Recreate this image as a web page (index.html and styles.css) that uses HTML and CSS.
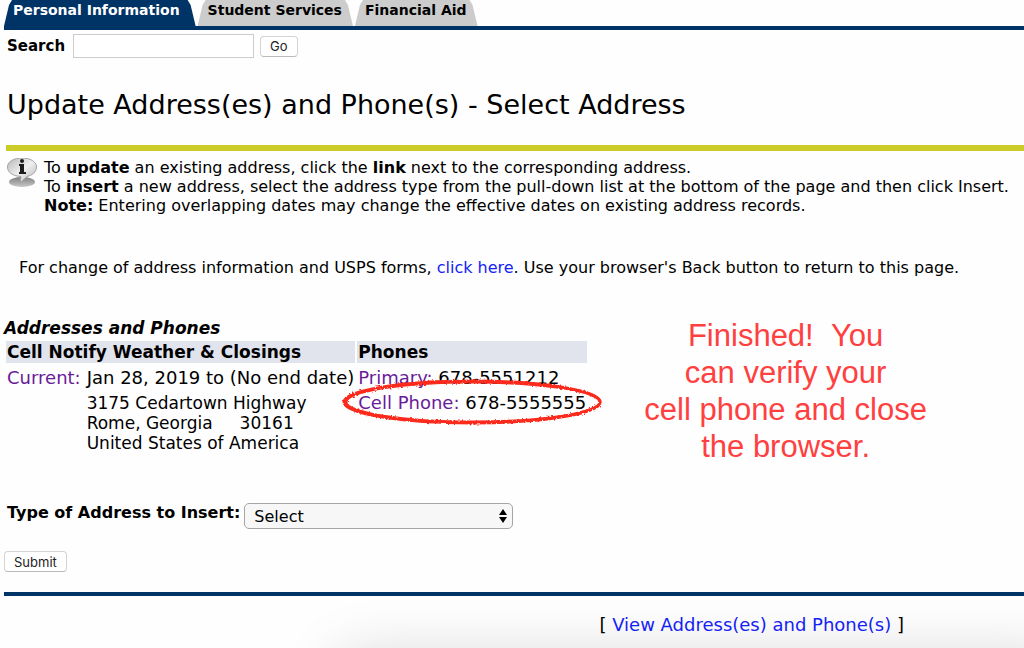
FILE: index.html
```html
<!DOCTYPE html>
<html lang="en">
<head>
    <meta charset="UTF-8">
    <meta name="viewport" content="width=device-width, initial-scale=1.0">
    <title>Update Address(es) and Phone(s) - Select Address</title>
    <link rel="stylesheet" href="styles.css">
</head>
<body>
    <nav class="tabs">
        <a href="#" class="tab active">Personal Information</a>
        <a href="#" class="tab">Student Services</a>
        <a href="#" class="tab">Financial Aid</a>
    </nav>

    <form class="search">
        <label for="search">Search</label>
        <input type="text" id="search">
        <button type="submit">Go</button>
    </form>

    <h1>Update Address(es) and Phone(s) - Select Address</h1>

    <div class="info">
        <svg class="info-icon" width="30" height="30" viewBox="0 1 30 30" aria-hidden="true">
            <defs>
                <linearGradient id="bubble" x1="0" y1="0" x2="1" y2="1">
                    <stop offset="0" stop-color="#b8b8b8"/>
                    <stop offset="0.5" stop-color="#f0f0f0"/>
                    <stop offset="1" stop-color="#b4b4b4"/>
                </linearGradient>
                <linearGradient id="shade" x1="0" y1="0" x2="0" y2="1">
                    <stop offset="0" stop-color="#808080"/>
                    <stop offset="1" stop-color="#c8c8c8"/>
                </linearGradient>
            </defs>
            <ellipse cx="15" cy="25" rx="13" ry="5" fill="url(#shade)"/>
            <path d="M15 1C23 1 29.500 4.500 29.500 10C29.500 15 25 18.500 20 19.500L13 26L14 19.500C5 19 .5 15 .5 10C.5 4.500 7 1 15 1Z" fill="url(#bubble)" stroke="#a2a2a2"/>
            <circle cx="15" cy="4" r="2" fill="#1c1c1c"/>
            <path d="M12 7h5v8h2v2h-7v-2h1V9h-1z" fill="#1c1c1c"/>
        </svg>
        <p>
            To <b>update</b> an existing address, click the <b>link</b> next to the corresponding address.<br>
            To <b>insert</b> a new address, select the address type from the pull-down list at the bottom of the page and then click Insert.<br>
            <b>Note:</b> Entering overlapping dates may change the effective dates on existing address records.
        </p>
    </div>

    <p class="usps">For change of address information and USPS forms, <a href="#">click here</a>. Use your browser's Back button to return to this page.</p>

    <div class="records">
        <table>
            <caption>Addresses and Phones</caption>
            <thead>
                <tr>
                    <th colspan="2">Cell Notify Weather &amp; Closings</th>
                    <th class="phones">Phones</th>
                </tr>
            </thead>
            <tbody>
                <tr>
                    <td class="type"><a href="#" class="visited">Current:</a></td>
                    <td>Jan 28, 2019 to (No end date)</td>
                    <td><a href="#" class="visited">Primary:</a> 678-5551212</td>
                </tr>
                <tr>
                    <td></td>
                    <td class="address">3175 Cedartown Highway<br>Rome, Georgia &nbsp; &nbsp; 30161<br>United States of America</td>
                    <td>
                        <div class="circled">
                            <a href="#" class="visited">Cell Phone:</a> 678-5555555
                            <svg class="circle" width="264" height="50" viewBox="0 0 264 50" aria-hidden="true">
                                <defs>
                                    <filter id="crayon">
                                        <feTurbulence type="fractalNoise" baseFrequency="0.5" numOctaves="2" result="noise"/>
                                        <feDisplacementMap in="SourceGraphic" in2="noise" scale="3"/>
                                    </filter>
                                </defs>
                                <g fill="none" stroke="#fb2b1c" stroke-width="3" filter="url(#crayon)">
                                    <ellipse cx="132" cy="25" rx="128" ry="21"/>
                                    <ellipse cx="133" cy="25" rx="127" ry="20"/>
                                </g>
                            </svg>
                        </div>
                    </td>
                </tr>
            </tbody>
        </table>
        <p class="note">Finished! &nbsp;You<br>can verify your<br>cell phone and close<br>the browser.</p>
    </div>

    <form class="insert">
        <div class="field">
            <label for="type">Type of Address to Insert:</label>
            <div class="select">
                <select id="type">
                    <option>Select</option>
                </select>
                <svg class="arrows" width="8" height="14" viewBox="0 0 8 14" aria-hidden="true">
                    <path d="M4 0L8 6H0zM4 14L0 8H8z"/>
                </svg>
            </div>
        </div>
        <button type="submit">Submit</button>
    </form>

    <footer>
        [ <a href="#">View Address(es) and Phone(s)</a> ]
    </footer>
</body>
</html>
```

FILE: styles.css
```css
* {
    box-sizing: border-box;
}

html {
    height: 100%;
}

body {
    min-height: 100%;
    margin: 0;
    padding-left: 4px;
    position: relative;
    overflow: hidden;
    font-family: Verdana, "DejaVu Sans", sans-serif;
    font-size: 16px;
    color: #000;
    background-color: #fefefe;
}

/* soft shadow along the bottom edge */
body::after {
    content: "";
    position: absolute;
    z-index: -1;
    bottom: 0;
    left: 380px;
    right: 0;
    height: 0;
    box-shadow: 0 48px 60px 40px rgba(0, 0, 0, 0.16);
}

a {
    color: #1422f5;
    text-decoration: none;
}

a.visited {
    color: #6a1b9a;
}

h1, p {
    margin: 0;
}

button {
    height: 21px;
    padding: 0 9px;
    font-family: Inter, sans-serif;
    font-size: 13px;
    line-height: 18px;
    color: #222;
    background-color: #fff;
    border: 1px solid #d4d4d4;
    border-bottom-color: #bbb;
    border-radius: 4px;
}

.tabs {
    display: flex;
    height: 30px;
    border-bottom: 4px solid #003366;
}

.tab {
    height: 26px;
    padding: 0 11px 0 10px;
    margin-right: 2px;
    font-size: 14px;
    font-weight: bold;
    line-height: 20px;
    color: #000;
    background-color: #ccc;
    clip-path: polygon(0 100%, 5px 5px, 8px 0, calc(100% - 8px) 0, calc(100% - 5px) 5px, 100% 100%);
}

.tab.active {
    padding: 0 16px 0 9px;
    color: #fff;
    background-color: #003366;
}

.search {
    display: flex;
    align-items: center;
    padding: 4px 3px 0;
}

.search label {
    font-size: 15px;
    font-weight: bold;
}

.search input {
    width: 181px;
    height: 24px;
    margin: 0 6px 0 8px;
    border: 1px solid #ccc;
    background-color: #fff;
}

h1 {
    padding-left: 3px;
    margin-top: 31px;
    font-size: 27px;
    font-weight: normal;
    line-height: 32px;
}

.info {
    display: flex;
    gap: 7px;
    margin: 24px 0 0 2px;
    padding-top: 7px;
    border-top: 6px solid #cccc29;
    line-height: 19px;
}

.info-icon {
    flex: none;
    margin-left: 1px;
}

.usps {
    margin: 43px 0 0 15px;
    line-height: 19px;
}

.records {
    display: flex;
    align-items: flex-start;
    gap: 55px;
    margin-top: 40px;
}

table {
    flex: none;
    border-spacing: 2px;
    font-size: 17px;
    line-height: 20px;
}

caption {
    text-align: left;
    font-weight: bold;
    font-style: italic;
    line-height: 22px;
}

th {
    padding: 1px;
    text-align: left;
    background-color: #e1e3ed;
}

td {
    padding: 3px 1px 0;
    font-size: 18px;
    vertical-align: top;
    white-space: nowrap;
}

.type {
    padding-right: 3px;
}

.address {
    font-size: 17px;
}

.phones {
    width: 230px;
}

.circled {
    position: relative;
}

.circle {
    position: absolute;
    top: -16px;
    left: -18px;
}

.note {
    font-family: Helvetica, "Liberation Sans", sans-serif;
    font-size: 31px;
    line-height: 37px;
    text-align: center;
    white-space: nowrap;
    color: #ff4040;
}

.insert {
    margin-top: 38px;
}

.field {
    display: flex;
    align-items: flex-start;
    gap: 4px;
    margin-bottom: 22px;
    padding-left: 3px;
}

.field label {
    font-weight: bold;
    line-height: 20px;
}

.select {
    position: relative;
}

.select select {
    width: 269px;
    height: 26px;
    padding: 0 9px;
    appearance: none;
    font-family: inherit;
    font-size: 16px;
    color: #000;
    background-color: #f7f7f7;
    border: 1px solid #a5a5a5;
    border-radius: 5px;
}

.arrows {
    position: absolute;
    top: 6px;
    right: 6px;
    pointer-events: none;
}

footer {
    margin-top: 20px;
    padding: 18px 120px 12px 0;
    border-top: 4px solid #003366;
    font-size: 18px;
    line-height: 22px;
    text-align: right;
}
```
